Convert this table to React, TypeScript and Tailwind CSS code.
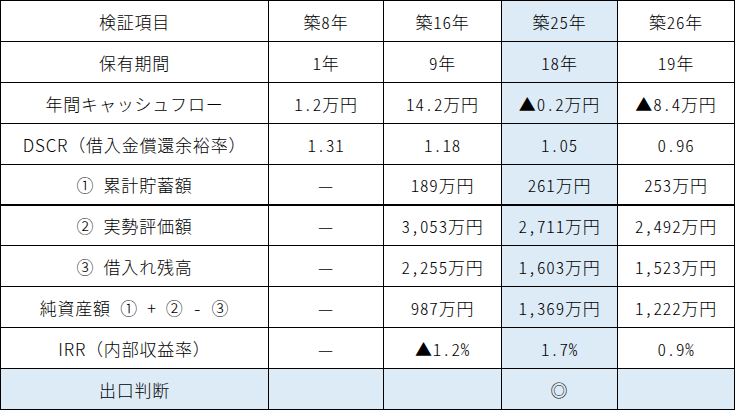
import React from "react";

const rows: string[][] = [
  ["検証項目", "築8年", "築16年", "築25年", "築26年"],
  ["保有期間", "1年", "9年", "18年", "19年"],
  ["年間キャッシュフロー", "1.2万円", "14.2万円", "▲0.2万円", "▲8.4万円"],
  ["DSCR（借入金償還余裕率）", "1.31", "1.18", "1.05", "0.96"],
  ["① 累計貯蓄額", "—", "189万円", "261万円", "253万円"],
  ["② 実勢評価額", "—", "3,053万円", "2,711万円", "2,492万円"],
  ["③ 借入れ残高", "—", "2,255万円", "1,603万円", "1,523万円"],
  ["純資産額 ① + ② - ③", "—", "987万円", "1,369万円", "1,222万円"],
  ["IRR（内部収益率）", "—", "▲1.2%", "1.7%", "0.9%"],
  ["出口判断", "", "", "◎", ""],
];

const colW = ["w-[268px]", "w-[115px]", "w-[118px]", "w-[116px]", "w-[117px]"];

export default function App() {
  return (
    <div className="w-[736px] h-[411px] bg-white">
      <div className="w-[735px] border-t border-l border-black font-['Noto_Sans_CJK_JP','Noto_Sans',sans-serif] font-light text-[17px] leading-none tracking-[0.8px] text-black">
        {rows.map((r, i) => {
          const rowCls =
            i === 4
              ? "h-[41px] border-b-2"
              : i === 5
              ? "h-[40px] border-b"
              : "h-[41px] border-b";
          const last = i === rows.length - 1;
          return (
            <div key={i} className={`flex border-black ${rowCls}`}>
              {r.map((c, j) => {
                const hw = j > 0 || (i >= 4 && i <= 7);
                return (
                  <div
                    key={j}
                    className={`${colW[j]} shrink-0 border-r border-black flex items-center justify-center whitespace-pre ${
                      hw ? "[font-feature-settings:'hwid']" : ""
                    } ${last || j === 3 ? "bg-[#ddebf7]" : "bg-white"}`}
                  >
                    {c}
                  </div>
                );
              })}
            </div>
          );
        })}
      </div>
    </div>
  );
}
